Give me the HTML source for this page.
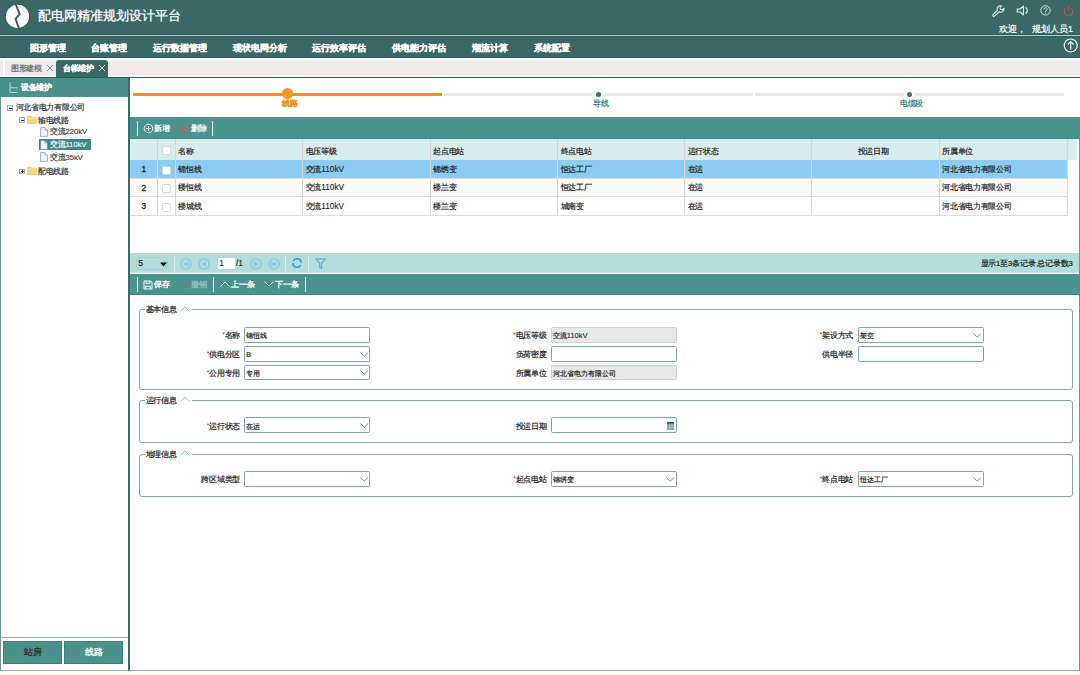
<!DOCTYPE html>
<html><head><meta charset="utf-8">
<style>
*{box-sizing:border-box;margin:0;padding:0}
html,body{width:1080px;height:675px;overflow:hidden;background:#fff;font-family:"Liberation Sans",sans-serif;color:#333}
.a{position:absolute}
#hdr{left:0;top:0;width:1080px;height:58px;background:#396867}
#hdrline{left:0;top:35px;width:1080px;height:1.2px;background:#bccdce}
#title{left:38.3px;top:7.4px;font-size:13.2px;-webkit-text-stroke-width:0.25px;color:#fff;line-height:18px;white-space:nowrap}
.menu{top:41.5px;font-size:9px;font-weight:bold;color:#fff;line-height:12px;white-space:nowrap;-webkit-text-stroke-width:0.3px}
#welcome{left:998.5px;top:23px;font-size:8.8px;-webkit-text-stroke-width:0.2px;color:#fff;line-height:12px;white-space:nowrap}
#tabbar{left:0;top:58px;width:1080px;height:19px;background:#efebeb;border-top:2px solid #fff;border-bottom:2px solid #fff}
#darkline{left:0;top:77px;width:1080px;height:1.3px;background:#2c5c5a}
.tab{font-size:7.8px;line-height:11px;white-space:nowrap;-webkit-text-stroke-width:0.2px;letter-spacing:-0.3px}
#left{left:0;top:78px;width:129px;height:592.5px;border-left:1px solid #6f9694}
#lefthdr{left:0;top:78px;width:129px;height:19px;background:#4a918c}
.tree{font-size:7.65px;line-height:11px;white-space:nowrap;color:#333;-webkit-text-stroke-width:0.2px;letter-spacing:-0.3px}
#content{left:128.1px;top:78px;width:951.9px;height:593px;border-left:2px solid #3c6a68;border-bottom:1.1px solid #8fb0aa}
.btn{top:641px;height:23px;background:#4a918b;border:1px solid #3f807a;font-size:8.6px;line-height:21px;text-align:center;-webkit-text-stroke-width:0.35px}

.step{font-size:7.8px;line-height:11px;white-space:nowrap;-webkit-text-stroke-width:0.2px;letter-spacing:-0.3px}
.tb{background:#4a948f}
.sep{width:1.3px;height:15px;background:#eef5f5}
.psep{top:256px;width:1px;height:15px;background:#d7ecec}
.tbt{font-size:7.8px;line-height:11px;color:#fff;white-space:nowrap;-webkit-text-stroke-width:0.25px}
.hl{left:130px;width:937.5px;height:1.4px;background:#dcdcdc}
.vl{top:139px;width:1.4px;height:76px;background:#d6d6d6}
.ck{width:9px;height:9px;background:#fff;border:1px solid #d6d9d9;border-radius:2px}
.gh{top:146px;font-size:7.65px;line-height:11px;color:#222;white-space:nowrap;-webkit-text-stroke-width:0.2px;letter-spacing:-0.3px}
.gc{font-size:7.65px;line-height:11px;color:#222;white-space:nowrap;-webkit-text-stroke-width:0.2px;letter-spacing:-0.3px}
.gn{font-size:7.65px;line-height:11px;color:#222;white-space:nowrap;-webkit-text-stroke-width:0.25px}

.fs{border:1.6px solid #85a7a4;border-radius:3px}
.lg{background:#fff}
.fl{font-size:7.8px;line-height:11px;color:#222;white-space:nowrap;-webkit-text-stroke-width:0.2px;letter-spacing:-0.3px}
.lab{font-size:7.8px;line-height:11px;color:#222;white-space:nowrap;-webkit-text-stroke-width:0.2px;letter-spacing:-0.3px}
.st{color:#e8141b;-webkit-text-stroke:0;font-size:7px;position:relative;top:-1px}
.inp{width:126px;height:15.6px;border:1.6px solid #7fa5a2;border-radius:1.5px;background:#fff}
.dis{background:#e7e8e8;border-color:#ccd0d0}
.iv{font-size:7px;line-height:11px;color:#222;white-space:nowrap;-webkit-text-stroke-width:0.2px}

.tbox{width:5.6px;height:5.6px;border:0.7px solid #9aa9bb;background:linear-gradient(#fff,#dde4ee)}
.tm{position:absolute;left:1px;top:1.7px;width:2.4px;height:0.7px;background:#333}
.tv{position:absolute;left:1.85px;top:0.85px;width:0.7px;height:2.4px;background:#333}
.l{letter-spacing:0;font-size:8.3px;-webkit-text-stroke-width:0.1px}
.iv .l{font-size:7.6px}
.tree .l{font-size:7.7px}
</style></head><body>
<div class="a" id="hdr"></div>
<div class="a" style="left:0;top:34.2px;width:1080px;height:0.9px;background:#2d5c5a"></div><div class="a" id="hdrline"></div><div class="a" style="left:0;top:36.4px;width:1080px;height:0.9px;background:#2d5c5a"></div><div class="a" style="left:0;top:56.8px;width:1080px;height:1.2px;background:#285755"></div>
<svg class="a" style="left:0;top:0" width="36" height="36" viewBox="0 0 36 36">
<circle cx="17.5" cy="16.4" r="12.2" fill="#2f615f"/><circle cx="17.5" cy="16.4" r="11.6" fill="#fff"/>
<polyline points="15.8,4.5 19.7,14.1 15.6,18.9 18.9,28.2" fill="none" stroke="#2a5e5c" stroke-width="1.9"/>
</svg>
<div class="a" id="title">配电网精准规划设计平台</div>
<div class="a menu" style="left:30px">图形管理</div>
<div class="a menu" style="left:91px">台账管理</div>
<div class="a menu" style="left:153px">运行数据管理</div>
<div class="a menu" style="left:233px">现状电网分析</div>
<div class="a menu" style="left:312px">运行效率评估</div>
<div class="a menu" style="left:392px">供电能力评估</div>
<div class="a menu" style="left:472px">潮流计算</div>
<div class="a menu" style="left:534px">系统配置</div>
<div class="a" id="welcome">欢迎，</div><div class="a" id="welcome" style="left:1032px">规划人员1</div>

<div class="a" id="tabbar"></div>
<div class="a" style="left:2.5px;top:60px;width:2px;height:15px;background:#fff"></div>
<div class="a tab" style="left:11px;top:62.8px;color:#666">图形建模</div>
<div class="a" style="left:56px;top:60px;width:52px;height:18px;background:#396867;border-radius:3px 3px 0 0"></div>
<div class="a tab" style="left:63px;top:62.8px;color:#fff;font-weight:bold">台帐维护</div>
<div class="a" id="darkline"></div>

<div class="a" id="left"></div>
<div class="a" id="lefthdr"></div>
<div class="a tree" style="left:21px;top:82px;color:#fff;font-weight:bold">设备维护</div>
<div class="a tree" style="left:15.7px;top:102px">河北省电力有限公司</div>
<div class="a tree" style="left:38px;top:114.5px">输电线路</div>
<div class="a tree" style="left:50px;top:126px">交流<span class="l">220kV</span></div>
<div class="a" style="left:38.7px;top:138.7px;width:52.3px;height:11.3px;background:#3f8782"></div>
<div class="a tree" style="left:50px;top:139px;color:#fff">交流<span class="l">110kV</span></div>
<div class="a tree" style="left:50px;top:152px">交流<span class="l">35kV</span></div>
<div class="a tree" style="left:38px;top:165.5px">配电线路</div>
<div class="a" style="left:0;top:636.5px;width:129px;height:1.3px;background:#8fb0aa"></div>
<div class="a btn" style="left:3.3px;width:58.7px;color:#333">站房</div>
<div class="a btn" style="left:64.3px;width:58.5px;color:#fff">线路</div>
<div class="a" style="left:0;top:670.2px;width:129px;height:1.1px;background:#8fb0aa"></div>

<div class="a" id="content"></div><div class="a" style="left:1079px;top:117px;width:1px;height:554px;background:#6f9694"></div>

<!-- steps -->
<div class="a" style="left:132.7px;top:92.6px;width:309.5px;height:3.5px;background:#f0901e"></div>
<div class="a" style="left:444px;top:92.8px;width:309px;height:3.3px;background:#e8e8e8"></div><div class="a" style="left:755px;top:92.8px;width:309px;height:3.3px;background:#e8e8e8"></div>
<div class="a" style="left:282px;top:88.3px;width:10.6px;height:10.6px;border-radius:50%;background:#f3952a"></div>
<div class="a step" style="left:282.3px;top:97.5px;color:#f0901e;font-weight:bold">线路</div>
<div class="a" style="left:592.5px;top:88.8px;width:11.5px;height:11.5px;border-radius:50%;background:#fff"></div>
<div class="a" style="left:595.5px;top:91.6px;width:5.6px;height:5.6px;border-radius:50%;background:#2b7b73"></div>
<div class="a step" style="left:593.3px;top:97.5px;color:#2b7b73">导线</div>
<div class="a" style="left:903.5px;top:88.8px;width:11.5px;height:11.5px;border-radius:50%;background:#fff"></div>
<div class="a" style="left:906.5px;top:91.6px;width:5.6px;height:5.6px;border-radius:50%;background:#2b7b73"></div>
<div class="a step" style="left:900px;top:97.5px;color:#2b7b73">电缆段</div>

<!-- grid toolbar -->
<div class="a tb" style="left:130px;top:117px;width:950px;height:22px;border-bottom:1px solid #3f8580"></div>
<div class="a sep" style="left:137px;top:121px"></div>
<svg class="a" style="left:142.5px;top:123px" width="11" height="11" viewBox="0 0 11 11"><circle cx="5.5" cy="5.5" r="4.3" fill="none" stroke="#fff" stroke-width="0.9"/><path d="M5.5 3v5M3 5.5h5" stroke="#fff" stroke-width="1.1"/></svg>
<div class="a tbt" style="left:154.4px;top:123px">新增</div>
<svg class="a" style="left:178.5px;top:123px" width="11" height="11" viewBox="0 0 11 11"><circle cx="5.5" cy="5.5" r="4.3" fill="none" stroke="#b9625a" stroke-width="0.9"/><path d="M3 5.5h5" stroke="#b9625a" stroke-width="1.1"/></svg>
<div class="a tbt" style="left:190.5px;top:123px">删除</div>
<div class="a sep" style="left:212px;top:121px"></div>

<!-- grid header -->
<div class="a" style="left:130px;top:139px;width:947px;height:21px;background:#d9ecec"></div>
<div class="a" style="left:130px;top:160px;width:937.5px;height:18px;background:#8ccbf2"></div>
<div class="a" style="left:130px;top:178px;width:937.5px;height:18px;background:#f9f9f9"></div>
<div class="a hl" style="top:177.5px"></div>
<div class="a hl" style="top:196px"></div>
<div class="a hl" style="top:214.5px"></div>
<div class="a vl" style="left:156.6px"></div>
<div class="a vl" style="left:174.6px"></div>
<div class="a vl" style="left:302.1px"></div>
<div class="a vl" style="left:429.6px"></div>
<div class="a vl" style="left:557.1px"></div>
<div class="a vl" style="left:684.1px"></div>
<div class="a vl" style="left:811.1px"></div>
<div class="a vl" style="left:938.6px"></div>
<div class="a vl" style="left:1066.6px"></div>

<div class="a ck" style="left:162px;top:145.5px"></div>
<div class="a gh" style="left:178.3px">名称</div>
<div class="a gh" style="left:305.8px">电压等级</div>
<div class="a gh" style="left:433.3px">起点电站</div>
<div class="a gh" style="left:560.8px">终点电站</div>
<div class="a gh" style="left:687.8px">运行状态</div>
<div class="a gh" style="left:857.8px">投运日期</div>
<div class="a gh" style="left:942.3px">所属单位</div>
<div class="a gn" style="left:141.6px;top:164.2px;font-size:8.3px;-webkit-text-stroke-width:0.3px">1</div>
<div class="a ck" style="left:162px;top:165.5px"></div>
<div class="a gc" style="left:178.3px;top:163.5px">锦恒线</div>
<div class="a gc" style="left:305.8px;top:163.5px">交流<span class="l">110kV</span></div>
<div class="a gc" style="left:433.3px;top:163.5px">锦绣变</div>
<div class="a gc" style="left:560.8px;top:163.5px">恒达工厂</div>
<div class="a gc" style="left:687.8px;top:163.5px">在运</div>
<div class="a gc" style="left:942.3px;top:163.5px">河北省电力有限公司</div>
<div class="a gn" style="left:141.6px;top:182.7px;font-size:8.3px;-webkit-text-stroke-width:0.3px">2</div>
<div class="a ck" style="left:162px;top:184.0px"></div>
<div class="a gc" style="left:178.3px;top:182.0px">楼恒线</div>
<div class="a gc" style="left:305.8px;top:182.0px">交流<span class="l">110kV</span></div>
<div class="a gc" style="left:433.3px;top:182.0px">楼兰变</div>
<div class="a gc" style="left:560.8px;top:182.0px">恒达工厂</div>
<div class="a gc" style="left:687.8px;top:182.0px">在运</div>
<div class="a gc" style="left:942.3px;top:182.0px">河北省电力有限公司</div>
<div class="a gn" style="left:141.6px;top:201.2px;font-size:8.3px;-webkit-text-stroke-width:0.3px">3</div>
<div class="a ck" style="left:162px;top:202.5px"></div>
<div class="a gc" style="left:178.3px;top:200.5px">楼城线</div>
<div class="a gc" style="left:305.8px;top:200.5px">交流<span class="l">110kV</span></div>
<div class="a gc" style="left:433.3px;top:200.5px">楼兰变</div>
<div class="a gc" style="left:560.8px;top:200.5px">城南变</div>
<div class="a gc" style="left:687.8px;top:200.5px">在运</div>
<div class="a gc" style="left:942.3px;top:200.5px">河北省电力有限公司</div>

<!-- pager -->
<div class="a" style="left:130px;top:253px;width:949px;height:1px;background:#c9d3d3"></div>
<div class="a" style="left:130px;top:254px;width:949px;height:19.3px;background:#b3dcdc"></div>
<div class="a" style="left:136.3px;top:256.6px;width:32px;height:13.4px;border:1px solid #a9cfcf;border-radius:3px"></div>
<div class="a gc" style="left:138.2px;top:257.6px;color:#222;font-size:8.6px">5</div>
<svg class="a" style="left:159.5px;top:261.5px" width="7" height="5" viewBox="0 0 7 5"><path d="M0 0.5h7L3.5 4.5z" fill="#111"/></svg>
<div class="a psep" style="left:174px"></div>
<svg class="a" style="left:180.3px;top:257.5px" width="12" height="12" viewBox="0 0 12 12"><circle cx="6" cy="6" r="5.2" fill="none" stroke="#86c4e6" stroke-width="1.1"/><path d="M6.2 3.8L3.6 6l2.6 2.2zM8.8 3.8L6.2 6l2.6 2.2z" fill="#86c4e6"/></svg>
<svg class="a" style="left:197.7px;top:257.5px" width="12" height="12" viewBox="0 0 12 12"><circle cx="6" cy="6" r="5.2" fill="none" stroke="#86c4e6" stroke-width="1.1"/><path d="M7.6 3.4L4 6l3.6 2.6z" fill="#86c4e6"/></svg>
<div class="a" style="left:217.5px;top:257.8px;width:17.8px;height:11.5px;background:#fff"></div>
<div class="a gc" style="left:219.3px;top:257.8px;color:#222;font-size:8.4px;-webkit-text-stroke-width:0.1px">1</div>
<div class="a gc" style="left:236px;top:257.8px;color:#222;font-size:8.4px;-webkit-text-stroke-width:0.1px;letter-spacing:0">/1</div>
<svg class="a" style="left:250.3px;top:257.5px" width="12" height="12" viewBox="0 0 12 12"><circle cx="6" cy="6" r="5.2" fill="none" stroke="#86c4e6" stroke-width="1.1"/><path d="M4.4 3.4L8 6 4.4 8.6z" fill="#86c4e6"/></svg>
<svg class="a" style="left:268.2px;top:257.5px" width="12" height="12" viewBox="0 0 12 12"><circle cx="6" cy="6" r="5.2" fill="none" stroke="#86c4e6" stroke-width="1.1"/><path d="M3.2 3.8L5.8 6 3.2 8.2zM5.8 3.8L8.4 6 5.8 8.2z" fill="#86c4e6"/></svg>
<div class="a psep" style="left:285px"></div>
<svg class="a" style="left:291px;top:257.3px" width="12" height="12" viewBox="0 0 12 12"><path d="M2.28 3.85A4.3 4.3 0 0 1 10.28 5.63" fill="none" stroke="#3a8fd8" stroke-width="1.45"/><path d="M9.72 8.15A4.3 4.3 0 0 1 1.7 6" fill="none" stroke="#3a8fd8" stroke-width="1.45"/></svg>
<div class="a psep" style="left:307.6px"></div>
<svg class="a" style="left:314.5px;top:257.6px" width="12" height="12" viewBox="0 0 12 12"><path d="M0.9 0.9H10.4L6.6 5.2V10.6L4.7 9V5.2Z" fill="none" stroke="#5aaee0" stroke-width="1.2" stroke-linejoin="round"/></svg>
<div class="a gc" style="left:980.5px;top:257.5px;color:#222;font-size:7.65px;letter-spacing:-0.2px">显示1至3条记录 总记录数3</div>

<!-- form toolbar -->
<div class="a" style="left:130px;top:272.4px;width:949px;height:1px;background:#c6e5e5"></div><div class="a tb" style="left:130px;top:273.6px;width:950px;height:21.7px;border-bottom:1px solid #3f8580"></div>
<div class="a sep" style="left:137px;top:277px"></div>
<svg class="a" style="left:143px;top:279.5px" width="10" height="10" viewBox="0 0 10 10"><path d="M1 1.5a0.5 0.5 0 0 1 0.5-0.5h6L9 2.5v6a0.5 0.5 0 0 1-0.5 0.5h-7a0.5 0.5 0 0 1-0.5-0.5z" fill="none" stroke="#f2f7f7" stroke-width="1.05"/><path d="M3 1v2.3h3.6V1M2.8 9V6.2h4.4V9" fill="none" stroke="#f2f7f7" stroke-width="1.05"/></svg>
<div class="a tbt" style="left:154.4px;top:279px;-webkit-text-stroke-width:0.4px">保存</div>
<svg class="a" style="left:180.5px;top:279.5px" width="8" height="11" viewBox="0 0 8 11"><path d="M1 3.2h2.6a2.8 2.8 0 0 1 2.8 2.8v3.2" fill="none" stroke="#b9675d" stroke-width="1.2"/><path d="M0.3 3.2L2.6 0.9v4.6z" fill="#b9675d"/></svg>
<div class="a tbt" style="left:190.5px;top:279px;color:#9ac3bf">撤销</div>
<div class="a sep" style="left:213px;top:277px"></div>
<svg class="a" style="left:219.5px;top:281px" width="10" height="6" viewBox="0 0 10 6"><path d="M0.5 5.5L5 1l4.5 4.5" fill="none" stroke="#fff" stroke-width="0.9"/></svg>
<div class="a tbt" style="left:231px;top:279px;-webkit-text-stroke-width:0.4px">上一条</div>
<svg class="a" style="left:263.5px;top:281px" width="10" height="6" viewBox="0 0 10 6"><path d="M0.5 0.5L5 5l4.5-4.5" fill="none" stroke="#fff" stroke-width="0.9"/></svg>
<div class="a tbt" style="left:275px;top:279px;-webkit-text-stroke-width:0.4px">下一条</div>
<div class="a sep" style="left:305.2px;top:277px"></div>


<!-- fieldsets -->
<div class="a fs" style="left:138.5px;top:309.3px;width:934.5px;height:80.5px"></div>
<div class="a lg" style="left:145.3px;top:304px;width:47px;height:10px"></div>
<div class="a fl" style="left:145.8px;top:304.3px">基本信息</div>
<svg class="a" style="left:179.5px;top:305.5px" width="10" height="6" viewBox="0 0 10 6"><path d="M0.7 5.3L5 1l4.3 4.3" fill="none" stroke="#6ab6e0" stroke-width="0.9"/></svg>

<div class="a fs" style="left:138.5px;top:400px;width:934.5px;height:43px"></div>
<div class="a lg" style="left:145.3px;top:395px;width:47px;height:10px"></div>
<div class="a fl" style="left:145.8px;top:395px">运行信息</div>
<svg class="a" style="left:179.5px;top:396.2px" width="10" height="6" viewBox="0 0 10 6"><path d="M0.7 5.3L5 1l4.3 4.3" fill="none" stroke="#6ab6e0" stroke-width="0.9"/></svg>

<div class="a fs" style="left:138.5px;top:453.5px;width:934.5px;height:43.2px"></div>
<div class="a lg" style="left:145.3px;top:448.5px;width:47px;height:10px"></div>
<div class="a fl" style="left:145.8px;top:448.5px">地理信息</div>
<svg class="a" style="left:179.5px;top:449.7px" width="10" height="6" viewBox="0 0 10 6"><path d="M0.7 5.3L5 1l4.3 4.3" fill="none" stroke="#6ab6e0" stroke-width="0.9"/></svg>
<div class="a lab" style="right:840px;top:330.0px"><span class="st">*</span>名称</div>
<div class="a inp" style="left:244.2px;top:327.2px"></div>
<div class="a iv" style="left:246.2px;top:330.0px">锦恒线</div>
<div class="a lab" style="right:840px;top:348.8px"><span class="st">*</span>供电分区</div>
<div class="a inp" style="left:244.2px;top:346px"></div>
<div class="a iv" style="left:246.2px;top:348.8px">B</div>
<svg class="a" style="left:359.5px;top:351.6px" width="9" height="5" viewBox="0 0 9 5"><path d="M0.6 0.6L4.3 4.2 8 0.6" fill="none" stroke="#6a9592" stroke-width="1"/></svg>
<div class="a lab" style="right:840px;top:367.6px"><span class="st">*</span>公用专用</div>
<div class="a inp" style="left:244.2px;top:364.8px"></div>
<div class="a iv" style="left:246.2px;top:367.6px">专用</div>
<svg class="a" style="left:359.5px;top:370.4px" width="9" height="5" viewBox="0 0 9 5"><path d="M0.6 0.6L4.3 4.2 8 0.6" fill="none" stroke="#6a9592" stroke-width="1"/></svg>
<div class="a lab" style="right:533.5px;top:330.0px"><span class="st">*</span>电压等级</div>
<div class="a inp dis" style="left:550.7px;top:327.2px"></div>
<div class="a iv" style="left:552.7px;top:330.0px">交流<span class="l">110kV</span></div>
<div class="a lab" style="right:533.5px;top:348.8px">负荷密度</div>
<div class="a inp" style="left:550.7px;top:346px"></div>
<div class="a lab" style="right:533.5px;top:367.6px">所属单位</div>
<div class="a inp dis" style="left:550.7px;top:364.8px"></div>
<div class="a iv" style="left:552.7px;top:367.6px">河北省电力有限公司</div>
<div class="a lab" style="right:227px;top:330.0px"><span class="st">*</span>架设方式</div>
<div class="a inp" style="left:857.7px;top:327.2px"></div>
<div class="a iv" style="left:859.7px;top:330.0px">架空</div>
<svg class="a" style="left:973.0px;top:332.8px" width="9" height="5" viewBox="0 0 9 5"><path d="M0.6 0.6L4.3 4.2 8 0.6" fill="none" stroke="#6a9592" stroke-width="1"/></svg>
<div class="a lab" style="right:227px;top:348.8px">供电半径</div>
<div class="a inp" style="left:857.7px;top:346px"></div>
<div class="a lab" style="right:840px;top:420.6px"><span class="st">*</span>运行状态</div>
<div class="a inp" style="left:244.2px;top:417.3px"></div>
<div class="a iv" style="left:246.2px;top:420.6px">在运</div>
<svg class="a" style="left:359.5px;top:423.4px" width="9" height="5" viewBox="0 0 9 5"><path d="M0.6 0.6L4.3 4.2 8 0.6" fill="none" stroke="#6a9592" stroke-width="1"/></svg>
<div class="a lab" style="right:533.5px;top:420.6px">投运日期</div>
<div class="a inp" style="left:550.7px;top:417.3px"></div>
<svg class="a" style="left:666.8px;top:422.2px" width="7.4" height="7.8" viewBox="0 0 7.4 7.8"><rect x="0" y="0" width="7.4" height="7.8" rx="0.6" fill="#6d9593"/><rect x="0" y="0" width="7.4" height="1.6" fill="#255a59"/><path d="M0 3.6h7.4M0 5.6h7.4M2.5 1.6v6.2M4.9 1.6v6.2" stroke="#d5e3e2" stroke-width="0.55"/></svg>
<div class="a lab" style="right:840px;top:474.0px">跨区域类型</div>
<div class="a inp" style="left:244.2px;top:471.2px"></div>
<svg class="a" style="left:359.5px;top:476.8px" width="9" height="5" viewBox="0 0 9 5"><path d="M0.6 0.6L4.3 4.2 8 0.6" fill="none" stroke="#6a9592" stroke-width="1"/></svg>
<div class="a lab" style="right:533.5px;top:474.0px"><span class="st">*</span>起点电站</div>
<div class="a inp" style="left:550.7px;top:471.2px"></div>
<div class="a iv" style="left:552.7px;top:474.0px">锦绣变</div>
<svg class="a" style="left:666.0px;top:476.8px" width="9" height="5" viewBox="0 0 9 5"><path d="M0.6 0.6L4.3 4.2 8 0.6" fill="none" stroke="#6a9592" stroke-width="1"/></svg>
<div class="a lab" style="right:227px;top:474.0px"><span class="st">*</span>终点电站</div>
<div class="a inp" style="left:857.7px;top:471.2px"></div>
<div class="a iv" style="left:859.7px;top:474.0px">恒达工厂</div>
<svg class="a" style="left:973.0px;top:476.8px" width="9" height="5" viewBox="0 0 9 5"><path d="M0.6 0.6L4.3 4.2 8 0.6" fill="none" stroke="#6a9592" stroke-width="1"/></svg>


<!-- header icons -->
<svg class="a" style="left:992.3px;top:5px" width="13" height="12" viewBox="0 0 13 12"><path d="M7 6.8L2.4 11.1A1 1 0 0 1 1 9.7L5.4 5.2A3.3 3.3 0 0 1 9.6 0.9L8 2.6L8.5 4.3L10.2 4.8L11.9 3.2A3.3 3.3 0 0 1 7 6.8Z" fill="none" stroke="#e6eeee" stroke-width="1.05" stroke-linejoin="round"/></svg>
<svg class="a" style="left:1015.5px;top:5px" width="13" height="11" viewBox="0 0 13 11"><path d="M1.2 4H3.9L7.4 1.1V9.9L3.9 7H1.2Z" fill="none" stroke="#e6eeee" stroke-width="1.1" stroke-linejoin="round"/><path d="M9.4 2.4A3.4 3.4 0 0 1 9.4 8.6" fill="none" stroke="#e6eeee" stroke-width="1.1"/></svg>
<svg class="a" style="left:1039.5px;top:5px" width="11" height="11" viewBox="0 0 11 11"><circle cx="5.5" cy="5.4" r="4.7" fill="none" stroke="#e6eeee" stroke-width="0.9"/><path d="M4 4.2a1.5 1.5 0 1 1 2.2 1.3c-0.5 0.3-0.7 0.6-0.7 1.2" fill="none" stroke="#e6eeee" stroke-width="0.9"/><circle cx="5.5" cy="8.1" r="0.55" fill="#e6eeee"/></svg>
<svg class="a" style="left:1063px;top:5px" width="11" height="12" viewBox="0 0 11 12"><path d="M3 3.2a4.2 4.2 0 1 0 5 0" fill="none" stroke="#c4553f" stroke-width="1.05"/><path d="M5.5 0.5v5" stroke="#c4553f" stroke-width="1.05"/></svg>
<svg class="a" style="left:1062.5px;top:37.5px" width="15" height="15" viewBox="0 0 15 15"><circle cx="7.7" cy="7.5" r="6.5" fill="none" stroke="#fff" stroke-width="1.1"/><path d="M7.7 11.5V3.8M4.8 6.5l2.9-2.8 2.9 2.8" fill="none" stroke="#fff" stroke-width="1.1"/></svg>
<!-- tab x -->
<svg class="a" style="left:46px;top:63.5px" width="8" height="8" viewBox="0 0 8 8"><path d="M1 1l6 6M7 1L1 7" stroke="#777" stroke-width="0.8"/></svg>
<svg class="a" style="left:98px;top:63.5px" width="8" height="8" viewBox="0 0 8 8"><path d="M1 1l6 6M7 1L1 7" stroke="#fff" stroke-width="0.8"/></svg>
<!-- left hdr icon -->
<svg class="a" style="left:8.5px;top:82px" width="9" height="11" viewBox="0 0 9 11"><path d="M1 0.5v10h7.5M1 5.8h7.5" fill="none" stroke="#d6eae8" stroke-width="0.8"/></svg>
<!-- tree icons -->
<div class="a tbox" style="left:7.3px;top:105.2px"><div class="tm"></div></div>
<div class="a tbox" style="left:19.3px;top:117.2px"><div class="tm"></div></div>
<div class="a tbox" style="left:19.3px;top:168.5px"><div class="tm"></div><div class="tv"></div></div>
<svg class="a" style="left:27px;top:115px" width="10" height="9" viewBox="0 0 10 9"><path d="M0.5 1.2h3.5l1 1h4.5v6.3h-9z" fill="#f3d77b" stroke="#d9b650" stroke-width="0.6"/><path d="M0.5 3h9" stroke="#fbeaa6" stroke-width="0.8"/></svg>
<svg class="a" style="left:27px;top:166.3px" width="10" height="9" viewBox="0 0 10 9"><path d="M0.5 1.2h3.5l1 1h4.5v6.3h-9z" fill="#f3d77b" stroke="#d9b650" stroke-width="0.6"/><path d="M0.5 3h9" stroke="#fbeaa6" stroke-width="0.8"/></svg>
<svg class="a" style="left:39.5px;top:126.8px" width="8" height="10" viewBox="0 0 8 10"><path d="M0.6 0.6h4.3l2.5 2.5v6.3H0.6z" fill="#f4f6fd" stroke="#7d86b8" stroke-width="0.7"/><path d="M4.9 0.6v2.5h2.5" fill="none" stroke="#7d86b8" stroke-width="0.6"/></svg>
<svg class="a" style="left:39.5px;top:139.8px" width="8" height="10" viewBox="0 0 8 10"><path d="M0.6 0.6h4.3l2.5 2.5v6.3H0.6z" fill="#f4f6fd" stroke="#7d86b8" stroke-width="0.7"/><path d="M4.9 0.6v2.5h2.5" fill="none" stroke="#7d86b8" stroke-width="0.6"/></svg>
<svg class="a" style="left:39.5px;top:152.3px" width="8" height="10" viewBox="0 0 8 10"><path d="M0.6 0.6h4.3l2.5 2.5v6.3H0.6z" fill="#f4f6fd" stroke="#7d86b8" stroke-width="0.7"/><path d="M4.9 0.6v2.5h2.5" fill="none" stroke="#7d86b8" stroke-width="0.6"/></svg>

</body></html>
